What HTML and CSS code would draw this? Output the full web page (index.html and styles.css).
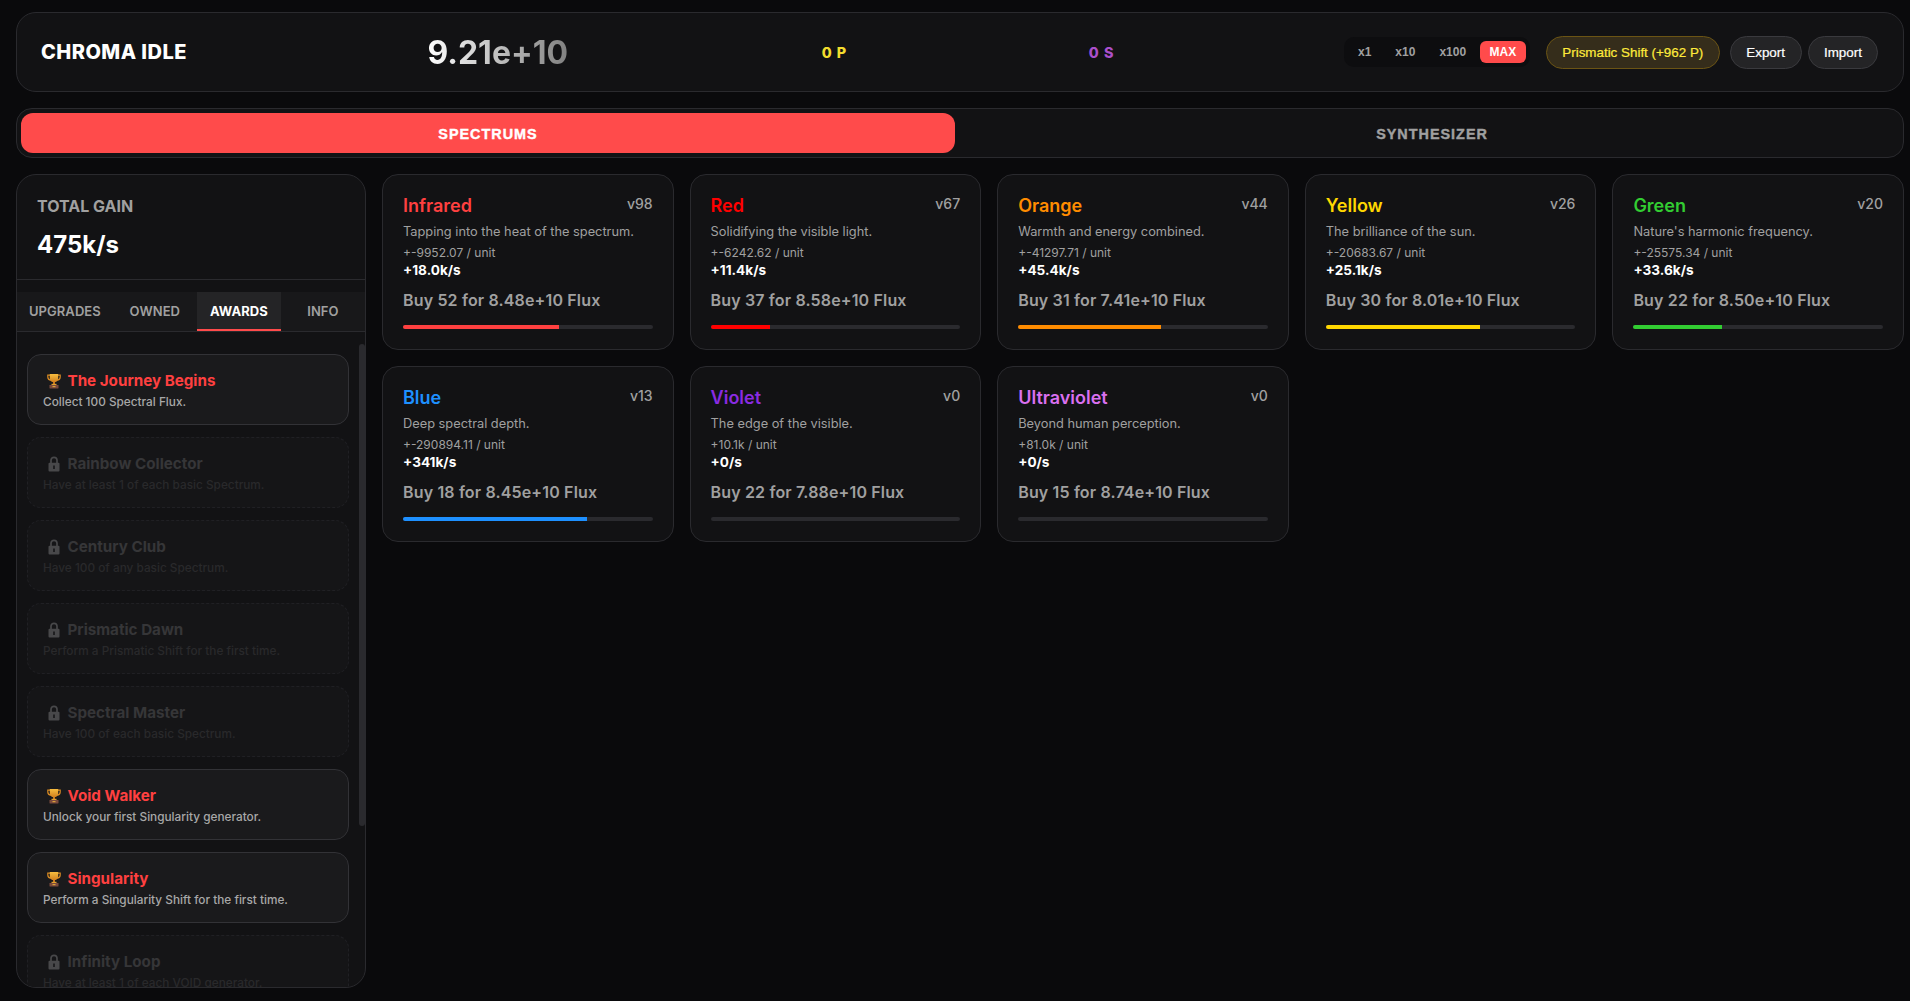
FILE: index.html
```html
<!DOCTYPE html>
<html lang="en">
<head>
<meta charset="utf-8">
<title>Chroma Idle</title>
<link rel="stylesheet" href="styles.css">
</head>
<body>
<svg class="defs" width="0" height="0" aria-hidden="true">
  <defs>
    <linearGradient id="gold" x1="0" y1="0" x2="0" y2="1"><stop offset="0" stop-color="#f7bd3f"/><stop offset="1" stop-color="#d07f1e"/></linearGradient>
    <symbol id="trophy" viewBox="0 0 16 16">
      <path d="M4 2.200H1.800v1.800C1.800 5.800 3 7 5 7.200M12 2.200h2.200v1.800c0 1.800-1.200 3-3.200 3.200" fill="none" stroke="#d98a22" stroke-width="1.200"/>
      <path d="M3.800 1h8.400v4.300C12.200 7.800 10.400 9.300 8 9.300S3.800 7.800 3.800 5.300z" fill="url(#gold)"/>
      <rect x="7" y="9" width="2" height="2.300" fill="#c9761c"/>
      <rect x="5.500" y="10.800" width="5" height="1.200" fill="#e0a030"/>
      <rect x="3.500" y="12" width="9" height="3.500" rx=".4" fill="#7b4a3c"/>
      <rect x="6.500" y="13" width="3" height="1.200" fill="#d9a13a"/>
    </symbol>
    <symbol id="lock" viewBox="0 0 16 16">
      <path d="M5 7V4.300a3 3 0 0 1 6 0V7" fill="none" stroke="currentColor" stroke-width="1.700"/>
      <rect x="2.500" y="6.800" width="11" height="8.700" rx="1" fill="currentColor"/>
      <rect x="7.200" y="9.500" width="1.600" height="3.500" fill="#161618"/>
    </symbol>
  </defs>
</svg>
<div class="app">
  <header class="topbar">
    <div class="brand">CHROMA IDLE</div>
    <div class="flux">9.21e+10</div>
    <div class="stat stat-p">0 P</div>
    <div class="stat stat-s">0 S</div>
    <div class="actions">
      <div class="multi">
        <button class="multi-btn">x1</button>
        <button class="multi-btn">x10</button>
        <button class="multi-btn">x100</button>
        <button class="multi-btn is-on">MAX</button>
      </div>
      <button class="pill pill-shift">Prismatic Shift (+962 P)</button>
      <div class="pill-pair">
        <button class="pill">Export</button>
        <button class="pill">Import</button>
      </div>
    </div>
  </header>

  <nav class="views">
    <button class="view is-on">SPECTRUMS</button>
    <button class="view">SYNTHESIZER</button>
  </nav>

  <main class="columns">
    <aside class="side">
      <div class="gain">
        <div class="gain-label">TOTAL GAIN</div>
        <div class="gain-value">475k/s</div>
      </div>
      <div class="side-tabs">
        <div class="side-tab">UPGRADES</div>
        <div class="side-tab">OWNED</div>
        <div class="side-tab is-on">AWARDS</div>
        <div class="side-tab">INFO</div>
      </div>
      <div class="awards">
        <div class="thumb"></div>
        <div class="award">
          <div class="award-title"><svg class="ico"><use href="#trophy"/></svg><span>The Journey Begins</span></div>
          <div class="award-desc">Collect 100 Spectral Flux.</div>
        </div>
        <div class="award is-locked">
          <div class="award-title"><svg class="ico"><use href="#lock"/></svg><span>Rainbow Collector</span></div>
          <div class="award-desc">Have at least 1 of each basic Spectrum.</div>
        </div>
        <div class="award is-locked">
          <div class="award-title"><svg class="ico"><use href="#lock"/></svg><span>Century Club</span></div>
          <div class="award-desc">Have 100 of any basic Spectrum.</div>
        </div>
        <div class="award is-locked">
          <div class="award-title"><svg class="ico"><use href="#lock"/></svg><span>Prismatic Dawn</span></div>
          <div class="award-desc">Perform a Prismatic Shift for the first time.</div>
        </div>
        <div class="award is-locked">
          <div class="award-title"><svg class="ico"><use href="#lock"/></svg><span>Spectral Master</span></div>
          <div class="award-desc">Have 100 of each basic Spectrum.</div>
        </div>
        <div class="award">
          <div class="award-title"><svg class="ico"><use href="#trophy"/></svg><span>Void Walker</span></div>
          <div class="award-desc">Unlock your first Singularity generator.</div>
        </div>
        <div class="award">
          <div class="award-title"><svg class="ico"><use href="#trophy"/></svg><span>Singularity</span></div>
          <div class="award-desc">Perform a Singularity Shift for the first time.</div>
        </div>
        <div class="award is-locked">
          <div class="award-title"><svg class="ico"><use href="#lock"/></svg><span>Infinity Loop</span></div>
          <div class="award-desc">Have at least 1 of each VOID generator.</div>
        </div>
      </div>
    </aside>

    <section class="cards">
      <article class="card c-infrared">
        <div class="card-head"><span class="card-name">Infrared</span><span class="card-level">v98</span></div>
        <p class="card-desc">Tapping into the heat of the spectrum.</p>
        <div class="card-unit">+-9952.07 / unit</div>
        <div class="card-rate">+18.0k/s</div>
        <div class="card-buy">Buy 52 for 8.48e+10 Flux</div>
        <div class="bar"><div class="bar-fill" style="width:62.5%"></div></div>
      </article>
      <article class="card c-red">
        <div class="card-head"><span class="card-name">Red</span><span class="card-level">v67</span></div>
        <p class="card-desc">Solidifying the visible light.</p>
        <div class="card-unit">+-6242.62 / unit</div>
        <div class="card-rate">+11.4k/s</div>
        <div class="card-buy">Buy 37 for 8.58e+10 Flux</div>
        <div class="bar"><div class="bar-fill" style="width:23.7%"></div></div>
      </article>
      <article class="card c-orange">
        <div class="card-head"><span class="card-name">Orange</span><span class="card-level">v44</span></div>
        <p class="card-desc">Warmth and energy combined.</p>
        <div class="card-unit">+-41297.71 / unit</div>
        <div class="card-rate">+45.4k/s</div>
        <div class="card-buy">Buy 31 for 7.41e+10 Flux</div>
        <div class="bar"><div class="bar-fill" style="width:57.2%"></div></div>
      </article>
      <article class="card c-yellow">
        <div class="card-head"><span class="card-name">Yellow</span><span class="card-level">v26</span></div>
        <p class="card-desc">The brilliance of the sun.</p>
        <div class="card-unit">+-20683.67 / unit</div>
        <div class="card-rate">+25.1k/s</div>
        <div class="card-buy">Buy 30 for 8.01e+10 Flux</div>
        <div class="bar"><div class="bar-fill" style="width:61.7%"></div></div>
      </article>
      <article class="card c-green">
        <div class="card-head"><span class="card-name">Green</span><span class="card-level">v20</span></div>
        <p class="card-desc">Nature's harmonic frequency.</p>
        <div class="card-unit">+-25575.34 / unit</div>
        <div class="card-rate">+33.6k/s</div>
        <div class="card-buy">Buy 22 for 8.50e+10 Flux</div>
        <div class="bar"><div class="bar-fill" style="width:35.5%"></div></div>
      </article>
      <article class="card c-blue">
        <div class="card-head"><span class="card-name">Blue</span><span class="card-level">v13</span></div>
        <p class="card-desc">Deep spectral depth.</p>
        <div class="card-unit">+-290894.11 / unit</div>
        <div class="card-rate">+341k/s</div>
        <div class="card-buy">Buy 18 for 8.45e+10 Flux</div>
        <div class="bar"><div class="bar-fill" style="width:73.7%"></div></div>
      </article>
      <article class="card c-violet">
        <div class="card-head"><span class="card-name">Violet</span><span class="card-level">v0</span></div>
        <p class="card-desc">The edge of the visible.</p>
        <div class="card-unit">+10.1k / unit</div>
        <div class="card-rate">+0/s</div>
        <div class="card-buy">Buy 22 for 7.88e+10 Flux</div>
        <div class="bar"></div>
      </article>
      <article class="card c-ultra">
        <div class="card-head"><span class="card-name">Ultraviolet</span><span class="card-level">v0</span></div>
        <p class="card-desc">Beyond human perception.</p>
        <div class="card-unit">+81.0k / unit</div>
        <div class="card-rate">+0/s</div>
        <div class="card-buy">Buy 15 for 8.74e+10 Flux</div>
        <div class="bar"></div>
      </article>
    </section>
  </main>
</div>
</body>
</html>
```
FILE: styles.css
```css
* { box-sizing: border-box; }
html, body { height: 100%; }
body {
  margin: 0;
  background: #0a0a0c;
  color: #fff;
  font-family: Inter, "Liberation Sans", sans-serif;
  overflow: hidden;
}
.defs { position: absolute; }
button { font-family: "Liberation Sans", Arial, sans-serif; cursor: pointer; }

.app {
  height: 1001px;
  padding: 12px 6px 13px 16px;
  display: flex;
  flex-direction: column;
  gap: 16px;
}

.topbar {
  flex: none;
  height: 80px;
  padding: 0 24.5px 0 24px;
  display: flex;
  justify-content: space-between;
  align-items: center;
  background: #121214;
  border: 1px solid #2a2a2e;
  border-radius: 20px;
}
.brand { font-size: 20px; font-weight: 800; letter-spacing: .45px; margin-right: 11px; }
.flux {
  font-size: 32px; font-weight: 700; letter-spacing: 0; margin-right: 24px;
  background: linear-gradient(90deg, #fff, #808080);
  -webkit-background-clip: text; background-clip: text; color: transparent;
}
.stat { font-size: 14.4px; font-weight: 800; letter-spacing: 1px; }
.stat-p { color: #f2dc2e; margin-right: 12px; }
.stat-s { color: #ab4fcb; }
.actions { display: flex; align-items: center; gap: 10px; }
.multi {
  display: flex; align-items: center; gap: 4px; padding: 4px; height: 30px; margin-right: 6px;
  background: #0d0d0f; border-radius: 10px;
}
.multi-btn {
  border: 0; background: transparent; color: #a0a0a0;
  font-size: 12px; font-weight: 700; padding: 4px 10px; border-radius: 6px;
}
.multi-btn.is-on { background: #ff4b4b; color: #fff; padding: 4px 9.5px; }
.pill {
  height: 33px; padding: 0 15.5px; border-radius: 17px;
  border: 1px solid #3a3a3e; background: #242426; color: #fff;
  font-size: 13.4px; font-weight: 400; -webkit-text-stroke: .2px currentColor;
}
.pill-pair { display: flex; gap: 6px; }
.pill-shift { background: #352d1b; border-color: #6b5414; color: #ffeb3b; }

.views {
  flex: none; height: 50px; padding: 4px; display: flex; gap: 10px;
  background: #121214; border: 1px solid #2a2a2e; border-radius: 16px;
}
.view {
  flex: 1 1 0; border: 0; background: transparent; color: #a0a0a0;
  font-size: 14.4px; font-weight: 700; letter-spacing: 1px; padding: 2px 0 0;
  -webkit-text-stroke: .4px currentColor;
  border-radius: 12px;
}
.view.is-on { background: #ff4b4b; color: #fff; }

.columns { flex: 1; min-height: 0; display: flex; gap: 16px; }

.side {
  flex: none; width: 350px; position: relative; overflow: hidden;
  display: flex; flex-direction: column;
  background: #121214; border: 1px solid #2a2a2e; border-radius: 20px;
}
.gain { flex: none; height: 105px; padding: 19px 20px 0; border-bottom: 1px solid #2a2a2e; }
.gain-label { font-size: 16px; font-weight: 700; color: #a0a0a0; line-height: 24px; }
.gain-value { font-size: 24px; font-weight: 700; line-height: 30px; margin-top: 12px; }
.side-tabs {
  flex: none; margin-top: 12px; height: 40px; display: flex;
  background: #18181a; border-bottom: 1px solid #2a2a2e;
}
.side-tab {
  flex: 1 1 0; padding: 0 12px; display: flex; align-items: center; justify-content: center;
  font-size: 13px; font-weight: 600; color: #a0a0a0; letter-spacing: .05px;
  border-bottom: 2px solid transparent;
}
.side-tab.is-on { background: #242426; color: #fff; font-weight: 700; border-bottom-color: #ff4b4b; }

.awards {
  flex: 1; min-height: 0; overflow: hidden; padding: 22px 10px 0 10px;
  display: flex; flex-direction: column; gap: 12px; position: relative;
}
.thumb {
  position: absolute; top: 12px; right: 0; width: 6px; height: 482px;
  background: #2a2a2e; border-radius: 3px;
}
.award {
  flex: none; width: 322px; height: 71px; padding: 16px 15px 0;
  background: #1a1a1c; border: 1px solid #323236; border-radius: 14px;
}
.award.is-locked { background: #151517; border: 1px dashed #202024; }
.award-title {
  display: flex; align-items: center; gap: 5.5px; font-size: 15.2px; font-weight: 700; color: #ff4040; line-height: 20px;
}
.ico { width: 16px; height: 16px; margin-left: 2.500px; flex: none; margin-right: .5px; }
.award-desc { font-size: 11.8px; font-weight: 500; color: #a8a8a8; line-height: 20px; margin-top: 1px; }
.is-locked .award-title { color: #363638; }
.is-locked .ico { color: #48484a; }
.is-locked .award-desc { color: #29292b; }

.cards {
  flex: 1; min-width: 0;
  display: grid; grid-template-columns: repeat(5, 1fr); grid-auto-rows: 176px; gap: 16px;
  align-content: start;
}
.card {
  padding: 19px 20px 20px; display: flex; flex-direction: column;
  background: #121214; border: 1px solid #2a2a2e; border-radius: 16px;
}
.card-head { display: flex; justify-content: space-between; align-items: flex-start; height: 25px; }
.card-name { font-size: 18px; font-weight: 600; line-height: 24px; color: var(--c); }
.card-level { font-size: 14px; color: #a0a0a0; font-weight: 500; line-height: 20px; }
.card-desc { margin: 4px 0 0; font-size: 12.8px; color: #a0a0a0; line-height: 18px; }
.card-unit { margin-top: 4px; font-size: 12px; color: #a0a0a0; line-height: 16px; }
.card-rate { font-size: 13.6px; font-weight: 700; line-height: 18px; color: #fff; }
.card-buy { margin-top: 10px; font-size: 16px; font-weight: 600; color: #a0a0a0; line-height: 22px; letter-spacing: .15px; }
.bar { margin-top: auto; height: 4px; background: #2a2a2e; border-radius: 2px; overflow: hidden; }
.bar-fill { height: 100%; background: var(--c); }
.c-infrared { --c: #ff4040; } .c-red { --c: #ff0000; } .c-orange { --c: #ff8c00; }
.c-yellow { --c: #ffd700; } .c-green { --c: #32cd32; } .c-blue { --c: #1e90ff; }
.c-violet { --c: #8a2be2; } .c-ultra { --c: #da70f0; }
```
